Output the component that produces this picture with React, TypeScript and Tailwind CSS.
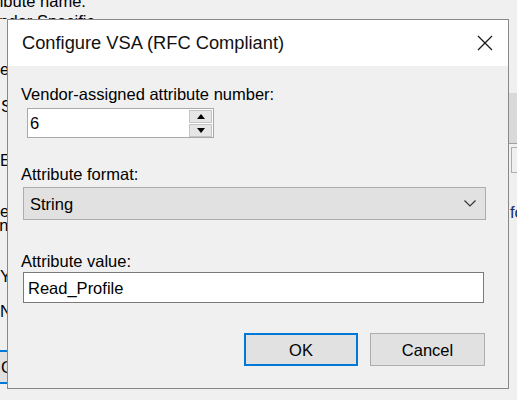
import React from 'react'

// partly hidden window behind the dialog: only the strips around the dialog show
const BehindWindow = () => (
  <div className="absolute inset-0 text-black leading-[20px]">
    <div className="absolute left-0 top-0 w-full h-[19px] overflow-hidden">
      <div className="ml-[-26px] mt-[-9px]">Attribute name:</div>
      <div className="ml-[-20px]">Vendor Specific</div>
    </div>

    <div className="absolute left-0 top-[19px] w-[7px] h-[381px] overflow-hidden">
      <div className="ml-[-11px] mt-[40px]">Select</div>
      <div className="ml-[1px] mt-[17px]">Specific</div>
      <div className="ml-0 mt-[34px]">Edit</div>
      <div className="ml-[-11px] mt-[34px] leading-[14px]">
        <div>Select</div>
        <div className="-ml-[9px]">Vendor</div>
      </div>
      <div className="ml-0 mt-[34px]">Yes</div>
      <div className="ml-0 mt-[15px]">No</div>
      <div className="ml-[-40px] mt-[29px] h-[34px] w-[120px] border-2 border-[#0078d7] bg-[#e1e1e1] flex items-center pl-[39px]">Cancel</div>
    </div>

    <div className="absolute left-[509px] top-[19px] w-[8px] h-[381px] overflow-hidden">
      <div className="mt-[74px] w-[20px] h-[50px] bg-[#d9d9d9]" />
      <div className="w-[20px] h-px bg-[#a0a0a0]" />
      <div className="ml-[2px] mt-[3px] w-[20px] h-[26px] border border-[#adadad]" />
      <div className="ml-px mt-[29px] text-[#1a2a6a]">for</div>
    </div>
  </div>
)

const Spinner = () => (
  <div className="flex flex-col gap-px mr-px">
    <div className="w-[23px] h-[13px] bg-[#e6e6e6] border border-[#c4c4c4] flex items-center justify-center">
      <svg width="8" height="5" viewBox="0 0 8 5"><path d="M0 5 L4 0 L8 5 Z" fill="#000" /></svg>
    </div>
    <div className="w-[23px] h-[13px] bg-[#e6e6e6] border border-[#c4c4c4] flex items-center justify-center">
      <svg width="8" height="5" viewBox="0 0 8 5"><path d="M0 0 L4 5 L8 0 Z" fill="#000" /></svg>
    </div>
  </div>
)

export default function App() {
  return (
    <div className="relative w-[517px] h-[400px] overflow-hidden bg-[#f0f0f0] font-['Liberation_Sans',Arial,sans-serif] text-[16.5px] text-black">
      <BehindWindow />

      <div className="absolute left-[7px] top-[19px] w-[502px] h-[370px] border border-[#888888] bg-[#f0f0f0] flex flex-col">
        <div className="h-[46px] shrink-0 bg-white flex items-center justify-between pl-[14px] pr-[15px]">
          <span className="text-[18.3px] text-[#111]">Configure VSA (RFC Compliant)</span>
          <svg width="16" height="16" viewBox="0 0 16 16">
            <path d="M1 1 L15 15 M15 1 L1 15" stroke="#1a1a1a" strokeWidth="1.3" fill="none" />
          </svg>
        </div>

        <div className="flex flex-col leading-[20px]">
          <div className="mt-[18px] ml-[13px]">Vendor-assigned attribute number:</div>
          <div className="mt-[4px] ml-[19px] w-[187px] h-[30px] bg-white border border-[#a9a9a9] flex items-center justify-between">
            <span className="pl-[2px]">6</span>
            <Spinner />
          </div>

          <div className="mt-[26px] ml-[13px]">Attribute format:</div>
          <div className="mt-[3px] ml-[15px] w-[463px] h-[33px] bg-[#e1e1e1] border border-[#adadad] flex items-center justify-between pl-[6px] pr-[9px]">
            <span>String</span>
            <svg width="12" height="7" viewBox="0 0 12 7">
              <path d="M0.5 0.5 L6 6 L11.5 0.5" stroke="#333" strokeWidth="1.2" fill="none" />
            </svg>
          </div>

          <div className="mt-[31px] ml-[13px]">Attribute value:</div>
          <div className="mt-[1px] ml-[15px] w-[461px] h-[31px] bg-white border border-[#7a7a7a] flex items-center pl-[4px]">
            Read_Profile
          </div>

          <div className="mt-[30px] ml-[236px] flex gap-[12px]">
            <button className="w-[114px] h-[33px] bg-[#e1e1e1] border-2 border-[#0078d7] flex items-center justify-center">OK</button>
            <button className="w-[115px] h-[33px] bg-[#e1e1e1] border border-[#adadad] flex items-center justify-center">Cancel</button>
          </div>
        </div>
      </div>
    </div>
  )
}
